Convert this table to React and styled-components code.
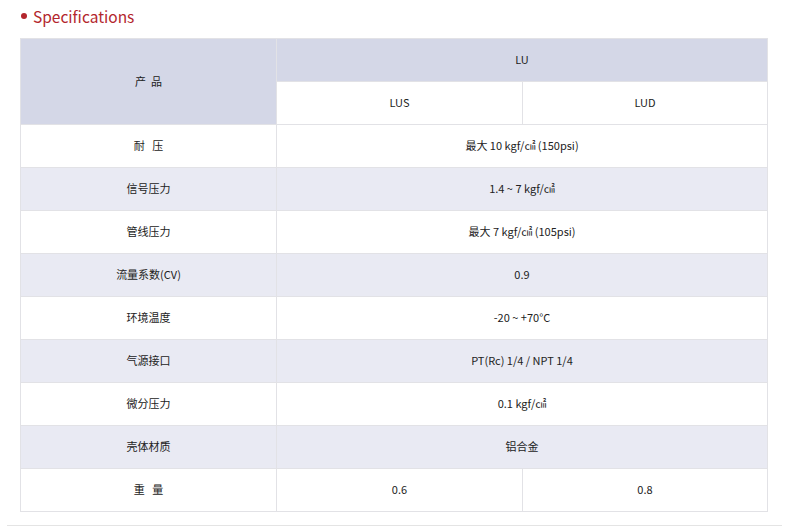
import React from "react";
import styled, { createGlobalStyle } from "styled-components";

const GlobalStyle = createGlobalStyle`
  body {
    margin: 0;
    background: #fff;
    font-family: "Noto Sans CJK SC", "Noto Sans", sans-serif;
  }
`;

const Page = styled.div`
  width: 775px;
  margin-left: 7px;
  padding-top: 3px;
`;

const Title = styled.h3`
  display: flex;
  align-items: center;
  gap: 6px;
  margin: 0 0 0 14px;
  height: 26px;
  font-size: 15.5px;
  font-weight: 400;
  color: #b3262d;
  &::before {
    content: "";
    width: 6px;
    height: 6px;
    border-radius: 50%;
    background: #b3262d;
  }
`;

const Table = styled.table`
  margin: 9px 0 0 13px;
  width: 747px;
  border-collapse: collapse;
  table-layout: fixed;
  font-size: 11px;
  color: #222;
`;

const Row = styled.tr`
  height: 43px;
  background: ${(p) => (p.striped ? "#e9eaf3" : "#fff")};
`;

const Cell = styled.td`
  border: 1px solid #e2e2e6;
  text-align: center;
  vertical-align: middle;
  padding: 0 0 2px;
  white-space: pre;
  background: ${(p) => (p.head ? "#d4d7e7" : "transparent")};
`;

const Footer = styled.div`
  margin-top: 13px;
  height: 1px;
  background: #e4e4e4;
`;

const rows = [
  ["耐   压", "最大 10 kgf/㎠ (150psi)"],
  ["信号压力", "1.4 ~ 7 kgf/㎠"],
  ["管线压力", "最大 7 kgf/㎠ (105psi)"],
  ["流量系数(CV)", "0.9"],
  ["环境温度", "-20 ~ +70°C"],
  ["气源接口", "PT(Rc) 1/4 / NPT 1/4"],
  ["微分压力", "0.1 kgf/㎠"],
  ["壳体材质", "铝合金"],
];

export default function App() {
  return (
    <>
      <GlobalStyle />
      <Page>
        <Title>Specifications</Title>
        <Table>
          <colgroup>
            <col style={{ width: 256 }} />
            <col style={{ width: 246 }} />
            <col style={{ width: 245 }} />
          </colgroup>
          <tbody>
            <Row>
              <Cell head rowSpan={2}>产  品</Cell>
              <Cell head colSpan={2}>LU</Cell>
            </Row>
            <Row>
              <Cell>LUS</Cell>
              <Cell>LUD</Cell>
            </Row>
            {rows.map(([label, value], i) => (
              <Row key={label} striped={i % 2 === 1}>
                <Cell>{label}</Cell>
                <Cell colSpan={2}>{value}</Cell>
              </Row>
            ))}
            <Row>
              <Cell>重   量</Cell>
              <Cell>0.6</Cell>
              <Cell>0.8</Cell>
            </Row>
          </tbody>
        </Table>
        <Footer />
      </Page>
    </>
  );
}
